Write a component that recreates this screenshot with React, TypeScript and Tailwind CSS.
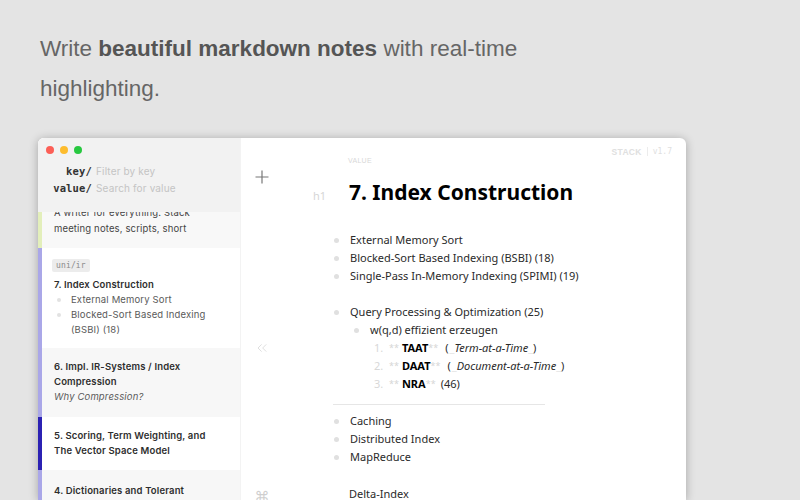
import { ChevronsLeft } from 'lucide-react'

const Dot = ({ className = '' }: { className?: string }) => (
  <span className={`inline-block w-[5px] h-[5px] rounded-full bg-[#e0e0e0] shrink-0 ${className}`} />
)

const Row = ({ children, indent = 0 }: { children: React.ReactNode; indent?: number }) => (
  <div className="flex items-center h-[18px] whitespace-nowrap" style={{ paddingLeft: 49 + indent }}>
    {children}
  </div>
)

const Faint = ({ children }: { children: React.ReactNode }) => (
  <span className="text-[#d6d6d6] text-[9px]">{children}</span>
)

const Card = ({
  border,
  bg,
  className = '',
  children,
}: {
  border: string
  bg: string
  className?: string
  children: React.ReactNode
}) => (
  <div className={`border-l-4 pl-3 pr-3 ${border} ${bg} ${className}`}>{children}</div>
)

const SubItem = ({ children }: { children: React.ReactNode }) => (
  <div className="flex items-start leading-[15px] text-[#5a5a5a]">
    <span className="w-[4px] h-[4px] rounded-full bg-[#e2e2e2] mt-[6px] ml-[3px] mr-[10px] shrink-0" />
    <span>{children}</span>
  </div>
)

function Sidebar() {
  return (
    <div className="w-[202px] shrink-0 flex flex-col [&>*]:shrink-0 bg-white font-['Inter',sans-serif] text-[9.5px] text-[#2e2e2e] tracking-[0.15px]">
      <div className="h-[74px] bg-[#f2f2f2] pt-2 pl-[8px]">
        <div className="flex gap-[6px] h-[8px]">
          <span className="w-[8px] h-[8px] rounded-full bg-[#fc5f57]" />
          <span className="w-[8px] h-[8px] rounded-full bg-[#fdbc2e]" />
          <span className="w-[8px] h-[8px] rounded-full bg-[#28c840]" />
        </div>
        <div className="mt-[9px] flex flex-col">
          {[
            ['key/', 'Filter by key'],
            ['value/', 'Search for value'],
          ].map(([k, v]) => (
            <div key={k} className="flex items-center h-[17px]">
              <span className="w-[46px] text-right font-['DejaVu_Sans_Mono',monospace] font-bold text-[10.5px] text-[#333]">
                {k}
              </span>
              <span className="ml-[4px] text-[10px] text-[#c4c4c4]">{v}</span>
            </div>
          ))}
        </div>
      </div>

      <Card border="border-[#e3efbb]" bg="bg-[#f8f8f8]" className="h-[36px] overflow-hidden">
        <div className="-mt-[7px] leading-[16px] text-[#444]">
          A writer for everything. Stack
          <br />
          meeting notes, scripts, short
        </div>
      </Card>

      <Card border="border-[#aaa7e8]" bg="bg-white" className="h-[100px] pt-[10px]">
        <div className="-ml-[2px] inline-block bg-[#ececec] rounded-[2px] px-[4px] h-[13px] leading-[13px] font-['DejaVu_Sans_Mono',monospace] text-[8px] text-[#8a8a8a]">
          uni/ir
        </div>
        <div className="mt-[5px] leading-[15px] font-semibold whitespace-nowrap">7. Index Construction</div>
        <SubItem>External Memory Sort</SubItem>
        <SubItem>
          Blocked-Sort Based Indexing
          <br />
          (BSBI) (18)
        </SubItem>
      </Card>

      <Card border="border-[#aaa7e8]" bg="bg-[#f7f7f7]" className="h-[69px] pt-[11px] leading-[15px]">
        <div className="font-semibold whitespace-nowrap">
          6. Impl. IR-Systems / Index
          <br />
          Compression
        </div>
        <div className="italic text-[#5a5a5a]">Why Compression?</div>
      </Card>

      <Card border="border-[#2b21b3]" bg="bg-white" className="h-[53px] pt-[11px] leading-[15px]">
        <div className="font-semibold whitespace-nowrap">
          5. Scoring, Term Weighting, and
          <br />
          The Vector Space Model
        </div>
      </Card>

      <Card border="border-[#aaa7e8]" bg="bg-[#f7f7f7]" className="flex-1 pt-[13px] leading-[15px]">
        <div className="font-semibold whitespace-nowrap">4. Dictionaries and Tolerant</div>
      </Card>
    </div>
  )
}

function Gutter() {
  return (
    <div className="w-[44px] shrink-0 flex flex-col items-center [&>*]:shrink-0">
      <svg className="mt-[32px] -ml-[2px]" width="14" height="14" viewBox="0 0 14 14">
        <path d="M7 0.5V13.5M0.5 7H13.5" stroke="#777" strokeWidth="1.2" />
      </svg>
      <ChevronsLeft className="mt-[156px] -ml-[2px]" size={16} strokeWidth={1} color="#cfcfcf" />
      <span className="mt-[133px] -ml-[2px] font-['DejaVu_Sans',sans-serif] text-[15px] leading-[16px] text-[#cfcfcf]">⌘</span>
    </div>
  )
}

function Editor() {
  return (
    <div className="flex-1 flex flex-col [&>*]:shrink-0 font-['Noto_Sans',sans-serif] text-[11px] text-[#2a2a2a]">
      <div className="flex justify-between items-start h-[36px]">
        <span className="mt-[19px] ml-[63px] leading-[8px] text-[7px] tracking-[0.3px] text-[#d8d8d8] font-['Liberation_Sans',sans-serif]">
          VALUE
        </span>
        <span className="mt-[9px] mr-[14px] flex items-center leading-[8px] font-['DejaVu_Sans_Mono',monospace] text-[8px] text-[#e0e0e0]">
          <span className="font-bold font-['Liberation_Sans',sans-serif] text-[8.5px] tracking-[0.3px]">STACK</span>
          <span className="mx-[5px] w-px h-[9px] bg-[#ececec]" />
          <span>v1.7</span>
        </span>
      </div>
      <div className="flex items-baseline h-[36px] leading-[36px]">
        <span className="w-[46px] pr-[5px] text-right text-[11px] text-[#d6d6d6]">h1</span>
        <span className="ml-[18px] text-[21px] font-bold text-black">7. Index Construction</span>
      </div>
      <div className="h-[21px]" />
      <Row><Dot /><span className="ml-[11px]">External Memory Sort</span></Row>
      <Row><Dot /><span className="ml-[11px]">Blocked-Sort Based Indexing (BSBI) (18)</span></Row>
      <Row><Dot /><span className="ml-[11px]">Single-Pass In-Memory Indexing (SPIMI) (19)</span></Row>
      <div className="h-[18px]" />
      <Row><Dot /><span className="ml-[11px]">Query Processing &amp; Optimization (25)</span></Row>
      <Row indent={20}><Dot /><span className="ml-[11px]">w(q,d) effizient erzeugen</span></Row>
      <Row indent={40}>
        <span className="text-[#d8d8d8] w-[15px]">1.</span>
        <Faint>**</Faint>
        <span className="font-bold text-black ml-[3px]">TAAT</span>
        <Faint>**</Faint>
        <span className="ml-[7px]">(</span>
        <span className="text-[#e2e2e2] ml-[1px]">_</span>
        <span className="italic">Term-at-a-Time</span>
        <span className="text-[#e2e2e2]">_</span>
        <span>)</span>
      </Row>
      <Row indent={40}>
        <span className="text-[#d8d8d8] w-[15px]">2.</span>
        <Faint>**</Faint>
        <span className="font-bold text-black ml-[3px]">DAAT</span>
        <Faint>**</Faint>
        <span className="ml-[7px]">(</span>
        <span className="text-[#e2e2e2] ml-[1px]">_</span>
        <span className="italic">Document-at-a-Time</span>
        <span className="text-[#e2e2e2]">_</span>
        <span>)</span>
      </Row>
      <Row indent={40}>
        <span className="text-[#d8d8d8] w-[15px]">3.</span>
        <Faint>**</Faint>
        <span className="font-bold text-black ml-[3px]">NRA</span>
        <Faint>**</Faint>
        <span className="ml-[5px]">(46)</span>
      </Row>
      <div className="h-[19px] flex items-center pl-[48px]">
        <div className="w-[212px] h-px bg-[#e6e6e6] mt-[3px]" />
      </div>
      <Row><Dot /><span className="ml-[11px]">Caching</span></Row>
      <Row><Dot /><span className="ml-[11px]">Distributed Index</span></Row>
      <Row><Dot /><span className="ml-[11px]">MapReduce</span></Row>
      <div className="h-[19px]" />
      <div className="flex items-center h-[18px] pl-[64px]">Delta-Index</div>
    </div>
  )
}

export default function App() {
  return (
    <div className="w-[800px] h-[500px] bg-[#e4e4e4] overflow-hidden flex flex-col">
      <div className="pt-[29px] pl-10 font-['Liberation_Sans',sans-serif] text-[22.5px] leading-[40px] text-[#666]">
        Write <b className="text-[#555]">beautiful markdown notes</b> with real-time
        <br />
        highlighting.
      </div>
      <div className="mt-[29px] ml-[38px] w-[648px] h-[362px] shrink-0 rounded-t-[6px] bg-white overflow-hidden flex shadow-[0_1px_10px_rgba(0,0,0,0.28)]">
        <Sidebar />
        <div className="flex-1 flex border-l border-[#f3f3f3]">
          <Gutter />
          <Editor />
        </div>
      </div>
    </div>
  )
}
